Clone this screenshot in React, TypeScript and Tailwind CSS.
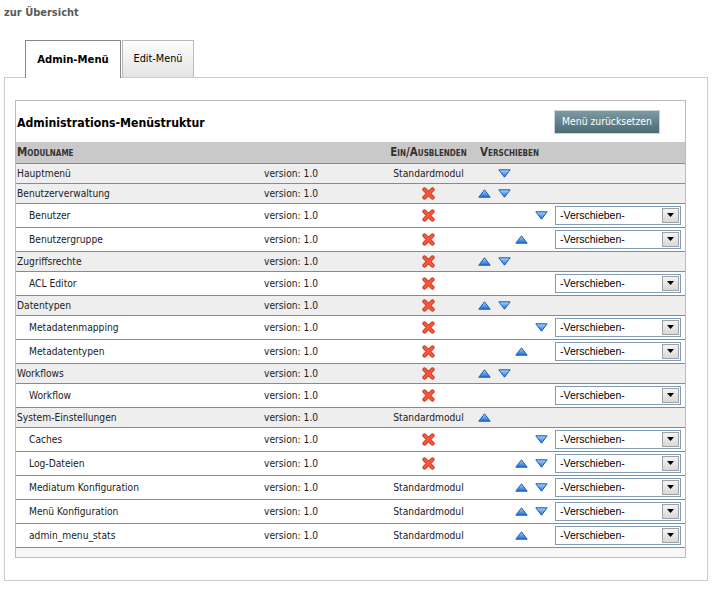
import React from "react";

type Row = {
  name: string;
  child: boolean;
  std?: boolean;
  up?: boolean;
  down?: boolean;
  select?: boolean;
};

const rows: Row[] = [
  { name: "Hauptmenü", child: false, std: true, down: true },
  { name: "Benutzerverwaltung", child: false, up: true, down: true },
  { name: "Benutzer", child: true, down: true, select: true },
  { name: "Benutzergruppe", child: true, up: true, select: true },
  { name: "Zugriffsrechte", child: false, up: true, down: true },
  { name: "ACL Editor", child: true, select: true },
  { name: "Datentypen", child: false, up: true, down: true },
  { name: "Metadatenmapping", child: true, down: true, select: true },
  { name: "Metadatentypen", child: true, up: true, select: true },
  { name: "Workflows", child: false, up: true, down: true },
  { name: "Workflow", child: true, select: true },
  { name: "System-Einstellungen", child: false, std: true, up: true },
  { name: "Caches", child: true, down: true, select: true },
  { name: "Log-Dateien", child: true, up: true, down: true, select: true },
  { name: "Mediatum Konfiguration", child: true, std: true, up: true, down: true, select: true },
  { name: "Menü Konfiguration", child: true, std: true, up: true, down: true, select: true },
  { name: "admin_menu_stats", child: true, std: true, up: true, select: true },
];

function Up() {
  return (
    <svg width="13" height="9" viewBox="0 0 13 9">
      <defs>
        <linearGradient id="gu" x1="0" y1="0" x2="0" y2="1">
          <stop offset="0" stopColor="#a8d6ff" />
          <stop offset="1" stopColor="#1c6bd4" />
        </linearGradient>
      </defs>
      <path d="M6.5 0.8 L12.2 8.2 L0.8 8.2 Z" fill="url(#gu)" stroke="#1a5cb0" strokeWidth="1" strokeLinejoin="round" />
    </svg>
  );
}

function Down() {
  return (
    <svg width="13" height="9" viewBox="0 0 13 9">
      <defs>
        <linearGradient id="gd" x1="0" y1="0" x2="0" y2="1">
          <stop offset="0" stopColor="#a8d6ff" />
          <stop offset="1" stopColor="#1c6bd4" />
        </linearGradient>
      </defs>
      <path d="M0.8 0.8 L12.2 0.8 L6.5 8.2 Z" fill="url(#gd)" stroke="#1a5cb0" strokeWidth="1" strokeLinejoin="round" />
    </svg>
  );
}

function Cross() {
  return (
    <svg width="13" height="13" viewBox="0 0 13 13">
      <path d="M2.5 2.5 L10.5 10.5 M10.5 2.5 L2.5 10.5" stroke="#c9301c" strokeWidth="4.2" strokeLinecap="round" />
      <path d="M2.5 2.5 L10.5 10.5 M10.5 2.5 L2.5 10.5" stroke="#f05a3a" strokeWidth="2.6" strokeLinecap="round" />
    </svg>
  );
}

function Select() {
  return (
    <div className="flex h-[19px] w-[126px] items-center border border-[#7f9db9] bg-white pl-[4px] pr-[1px]">
      <span className="flex-1 text-[10.5px] leading-none text-black" style={{ fontFamily: "'Liberation Sans', Arial, sans-serif" }}>
        -Verschieben-
      </span>
      <div className="flex h-[15px] w-[17px] items-center justify-center border border-[#a0a0a0] bg-gradient-to-b from-[#f4f4f4] to-[#d8d8d8]">
        <svg width="7" height="4" viewBox="0 0 7 4">
          <path d="M0 0 L7 0 L3.5 4 Z" fill="#000" />
        </svg>
      </div>
    </div>
  );
}

export default function App() {
  const font = { fontFamily: "Tahoma, 'DejaVu Sans Condensed', 'DejaVu Sans', sans-serif" };
  return (
    <div className="min-h-[590px] w-[717px] bg-white text-[10.2px] text-[#222]" style={font}>
      <div className="px-[4px] pt-[5px]">
        <div className="h-[16px] text-[11px] font-bold text-[#5a5a5a]">zur Übersicht</div>
        <div className="mt-[19px] flex pl-[21px]">
          <div className="relative z-10 -mb-px flex h-[38px] w-[96px] items-center justify-center border border-b-0 border-[#888] bg-white pt-px text-[11.2px] font-bold text-black">
            Admin-Menü
          </div>
          <div className="ml-px flex h-[37px] w-[72px] items-center justify-center border border-b-0 border-[#bbb] bg-gradient-to-b from-[#fdfdfd] to-[#e4e4e4] pt-px text-[10.8px] text-black">
            Edit-Menü
          </div>
        </div>
        <div className="h-[504px] w-[704px] border border-[#ccc] pl-[10px] pt-[22px]">
          <div className="h-[458px] w-[671px] border border-[#bbb]">
            <div className="flex h-[41px] items-center justify-between pl-px pr-[25px]">
              <div className="pt-[3px] text-[12.2px] font-bold text-black">Administrations-Menüstruktur</div>
              <div className="flex h-[24px] w-[106px] items-center justify-center border border-[#c8d4d8] bg-gradient-to-b from-[#7e9aa2] to-[#4b6a73] text-[10.3px] text-white">
                Menü zurücksetzen
              </div>
            </div>
            <table className="w-full border-collapse">
              <colgroup>
                <col className="w-[246px]" />
                <col className="w-[119px]" />
                <col className="w-[95px]" />
                <col className="w-[77px]" />
                <col />
              </colgroup>
              <thead>
                <tr className="h-[21px] bg-[#c9c9c9] text-[#333]">
                  <th className="pl-px text-left text-[11.5px] font-bold" style={{ fontVariant: "small-caps" }}>Modulname</th>
                  <th></th>
                  <th className="text-center text-[11.5px] font-bold" style={{ fontVariant: "small-caps" }}>Ein/Ausblenden</th>
                  <th className="pl-[4px] text-left text-[11.5px] font-bold" style={{ fontVariant: "small-caps" }}>Verschieben</th>
                  <th></th>
                </tr>
              </thead>
              <tbody>
                {rows.map((r, i) => (
                  <tr
                    key={i}
                    className={
                      (r.child ? "h-[24px] bg-white " : "h-[20px] bg-[#eeeeee] ") +
                      "border-t border-[#8a8a8a]"
                    }
                  >
                    <td className={(r.child ? "pl-[13px]" : "pl-px") + " pt-px"}>{r.name}</td>
                    <td className="pl-[2px] pt-px">version: 1.0</td>
                    <td className="pt-px text-center">
                      {r.std ? (
                        <span>Standardmodul</span>
                      ) : (
                        <div className="flex justify-center">
                          <Cross />
                        </div>
                      )}
                    </td>
                    <td>
                      <div className={"flex gap-[7px] " + (r.child ? "justify-end pr-[5px]" : "pl-[2px]")}>
                        <div className="w-[13px]">{r.up && <Up />}</div>
                        <div className="w-[13px]">{r.down && <Down />}</div>
                      </div>
                    </td>
                    <td className="pl-[2px]">{r.select && <Select />}</td>
                  </tr>
                ))}
                <tr className="h-[10px] border-t border-[#8a8a8a] bg-[#f7f7f7]">
                  <td colSpan={5}></td>
                </tr>
              </tbody>
            </table>
          </div>
        </div>
      </div>
    </div>
  );
}
